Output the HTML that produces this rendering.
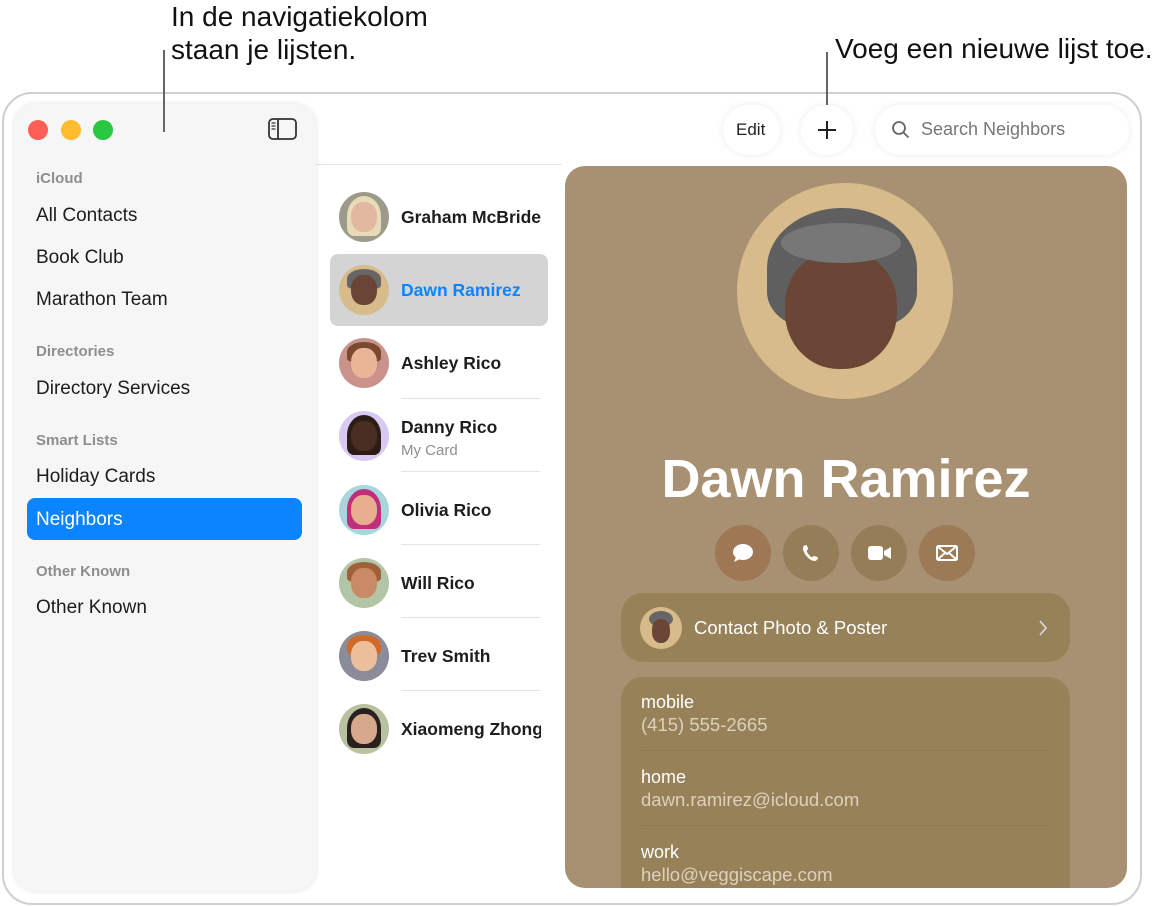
<!DOCTYPE html>
<html><head><meta charset="utf-8"><style>
*{margin:0;padding:0;box-sizing:border-box}
body{width:1170px;height:907px;background:#fff;position:relative;overflow:hidden;font-family:"Liberation Sans",sans-serif;color:#1d1d1f}
.abs{position:absolute}
.ann{position:absolute;font-size:28px;color:#111;line-height:33px;white-space:nowrap}
.win{left:2px;top:92px;width:1140px;height:813px;border:2px solid #cfcfcf;border-radius:30px;background:#fff}
.side{left:14px;top:104px;width:302px;height:787px;background:#f6f6f6;border-radius:22px;box-shadow:0 0 6px rgba(0,0,0,.12)}
.dot{position:absolute;top:120px;width:20px;height:20px;border-radius:50%}
.sh{position:absolute;left:36px;font-size:15px;font-weight:bold;color:#8e8e8e}
.si{position:absolute;left:36px;font-size:19px;color:#1d1d1f}
.sel{left:27px;top:498px;width:275px;height:42px;background:#0a84ff;border-radius:8px}
.av{position:absolute;width:50px;height:50px;border-radius:50%;overflow:hidden;left:339px}
.av i{position:absolute;left:12px;top:10px;width:26px;height:30px;border-radius:45%;}
.av b{position:absolute;left:8px;top:4px;width:34px;height:20px;border-radius:50% 50% 20% 20%}
.nm{position:absolute;left:401px;font-size:17.5px;font-weight:bold;color:#1d1d1f;white-space:nowrap;width:140px;overflow:hidden}
.sep{position:absolute;left:401px;width:139px;height:1px;background:#e3e3e3}
.btn{position:absolute;top:525px;width:56px;height:56px;border-radius:50%;background:#957e57}
.card{left:565px;top:166px;width:562px;height:722px;background:#a89172;border-radius:20px;overflow:hidden}
.lbl{position:absolute;left:76px;font-size:18px;color:#fff;white-space:nowrap}
.val{position:absolute;left:76px;font-size:18.5px;color:#ddd1bd;white-space:nowrap}
</style></head><body>
<div class="ann" style="left:171px;top:0px">In de navigatiekolom<br>staan je lijsten.</div>
<div class="ann" style="left:835px;top:32px">Voeg een nieuwe lijst toe.</div>

<div class="abs win"></div>
<div class="abs" style="left:316px;top:164px;width:246px;height:1px;background:#e6e6e6"></div>
<div class="abs side"></div>
<div class="abs" style="left:163px;top:50px;width:2px;height:82px;background:#666"></div>
<div class="abs" style="left:826px;top:52px;width:2px;height:54px;background:#666"></div>
<div class="dot" style="left:28px;background:#ff5f57"></div>
<div class="dot" style="left:61px;background:#febc2e"></div>
<div class="dot" style="left:93px;background:#28c840"></div>
<svg class="abs" style="left:268px;top:118px" width="29" height="22" viewBox="0 0 29 22"><rect x="1" y="1" width="27" height="20" rx="4" fill="none" stroke="#333" stroke-width="1.8"/><line x1="10" y1="1" x2="10" y2="21" stroke="#333" stroke-width="1.8"/><path d="M3.5 5h4M3.5 8h4M3.5 11h4" stroke="#333" stroke-width="1.3"/></svg>

<div class="sh" style="top:170px">iCloud</div>
<div class="si" style="top:205px">All Contacts</div>
<div class="si" style="top:247px">Book Club</div>
<div class="si" style="top:289px">Marathon Team</div>
<div class="sh" style="top:343px">Directories</div>
<div class="si" style="top:378px">Directory Services</div>
<div class="sh" style="top:432px">Smart Lists</div>
<div class="si" style="top:466px">Holiday Cards</div>
<div class="abs sel"></div>
<div class="si" style="top:509px;color:#fff">Neighbors</div>
<div class="sh" style="top:563px">Other Known</div>
<div class="si" style="top:597px">Other Known</div>

<!-- toolbar -->
<div class="abs" style="left:723px;top:105px;width:57px;height:50px;border-radius:25px;background:#fff;box-shadow:0 0 8px rgba(0,0,0,.08)"></div>
<div class="abs" style="left:736px;top:120px;font-size:17px;color:#222">Edit</div>
<div class="abs" style="left:801px;top:105px;width:52px;height:50px;border-radius:25px;background:#fff;box-shadow:0 0 8px rgba(0,0,0,.08)"></div>
<svg class="abs" style="left:817px;top:120px" width="20" height="20"><path d="M10 1v18M1 10h18" stroke="#222" stroke-width="2"/></svg>
<div class="abs" style="left:875px;top:105px;width:254px;height:50px;border-radius:25px;background:#fff;box-shadow:0 0 8px rgba(0,0,0,.08)"></div>
<svg class="abs" style="left:891px;top:120px" width="20" height="20"><circle cx="8" cy="8" r="6" fill="none" stroke="#666" stroke-width="1.8"/><path d="M12.5 12.5l5 5" stroke="#666" stroke-width="1.8"/></svg>
<div class="abs" style="left:921px;top:119px;font-size:18px;color:#777">Search Neighbors</div>

<!-- list -->
<div class="abs" style="left:330px;top:254px;width:218px;height:72px;background:#d4d4d4;border-radius:8px"></div>
<div class="av" style="top:192px;background:#9c9a8a"><b style="background:#e8dcb8;height:40px"></b><i style="background:#e2b9a0"></i></div>
<div class="nm" style="top:207px">Graham McBride</div>
<div class="av" style="top:265px;background:#d8bb8a"><b style="background:#666"></b><i style="background:#6a4535"></i></div>
<div class="nm" style="top:280px;color:#0a84ff">Dawn Ramirez</div>
<div class="av" style="top:338px;background:#c9928a"><b style="background:#7a4a30"></b><i style="background:#e8b596"></i></div>
<div class="nm" style="top:353px">Ashley Rico</div>
<div class="sep" style="top:398px"></div>
<div class="av" style="top:411px;background:#d9c9f2"><b style="background:#2b1d16;height:40px"></b><i style="background:#4a2e22"></i></div>
<div class="nm" style="top:417px">Danny Rico</div>
<div class="abs" style="left:401px;top:442px;font-size:15px;color:#8e8e8e">My Card</div>
<div class="sep" style="top:471px"></div>
<div class="av" style="top:485px;background:#a9d6dc"><b style="background:#c0307a;height:40px"></b><i style="background:#e7ae90"></i></div>
<div class="nm" style="top:500px">Olivia Rico</div>
<div class="sep" style="top:544px"></div>
<div class="av" style="top:558px;background:#b2c5a6"><b style="background:#a0603a"></b><i style="background:#c98b66"></i></div>
<div class="nm" style="top:573px">Will Rico</div>
<div class="sep" style="top:617px"></div>
<div class="av" style="top:631px;background:#8a8d99"><b style="background:#d06a2a"></b><i style="background:#ecbf9c"></i></div>
<div class="nm" style="top:646px">Trev Smith</div>
<div class="sep" style="top:690px"></div>
<div class="av" style="top:704px;background:#b8c2a0"><b style="background:#2a2020;height:40px"></b><i style="background:#d6a88c"></i></div>
<div class="nm" style="top:719px">Xiaomeng Zhong</div>

<!-- card -->
<div class="abs card">
  <div class="abs" style="left:172px;top:17px;width:216px;height:216px;border-radius:50%;background:#d8bb8a;overflow:hidden">
    <div class="abs" style="left:30px;top:25px;width:150px;height:120px;border-radius:50% 50% 30% 30%;background:#5f5f5f"></div>
    <div class="abs" style="left:48px;top:68px;width:112px;height:118px;border-radius:45% 45% 48% 48%;background:#6b4636"></div>
    <div class="abs" style="left:44px;top:40px;width:120px;height:40px;border-radius:50%;background:#777"></div>
  </div>
  <div class="abs" style="left:0;width:562px;top:282px;text-align:center;font-size:54px;font-weight:bold;color:#fff;white-space:nowrap">Dawn Ramirez</div>
</div>
<div class="btn" style="left:715px;background:#9e7754"></div>
<div class="btn" style="left:783px"></div>
<div class="btn" style="left:851px"></div>
<div class="btn" style="left:919px;background:#9b7a55"></div>
<svg class="abs" style="left:732px;top:543px" width="22" height="20"><ellipse cx="11" cy="9" rx="10" ry="8" fill="#fff"/><path d="M4 14l-2 5 6-3z" fill="#fff"/></svg>
<svg class="abs" style="left:802px;top:544px" width="18" height="18" viewBox="0 0 18 18"><path d="M4 1c1 0 2 3 2 4s-2 1-1 3 3 4 4 5 2-1 3-1 4 1 4 2-2 3-3 3C8 17 1 10 1 4c0-2 2-3 3-3z" fill="#fff"/></svg>
<svg class="abs" style="left:868px;top:545px" width="24" height="16"><rect x="0" y="1" width="15" height="14" rx="3" fill="#fff"/><path d="M16 6l7-4v12l-7-4z" fill="#fff"/></svg>
<svg class="abs" style="left:936px;top:545px" width="22" height="16"><rect x="1" y="1" width="20" height="14" rx="1.5" fill="none" stroke="#fff" stroke-width="2"/><path d="M1 1l10 8 10-8M1 15l8-7M21 15l-8-7" fill="none" stroke="#fff" stroke-width="2"/></svg>

<div class="abs" style="left:621px;top:593px;width:449px;height:69px;border-radius:22px;background:#978159"></div>
<div class="abs" style="left:640px;top:607px;width:42px;height:42px;border-radius:50%;background:#d8bb8a;overflow:hidden"><div class="abs" style="left:9px;top:4px;width:24px;height:16px;border-radius:50%;background:#666"></div><div class="abs" style="left:12px;top:12px;width:18px;height:24px;border-radius:45%;background:#6b4636"></div></div>
<div class="abs" style="left:694px;top:617px;font-size:18.5px;color:#fff;white-space:nowrap">Contact Photo &amp; Poster</div>
<svg class="abs" style="left:1038px;top:620px" width="10" height="16"><path d="M2 1l6 7-6 7" fill="none" stroke="#ddd" stroke-width="1.6"/></svg>

<div class="abs" style="left:621px;top:677px;width:449px;height:211px;border-radius:22px 22px 0 0;background:#978159"></div>
<div class="lbl" style="left:641px;top:692px">mobile</div>
<div class="val" style="left:641px;top:714px">(415) 555-2665</div>
<div class="abs" style="left:641px;top:750px;width:410px;height:1px;background:#8e7a55"></div>
<div class="lbl" style="left:641px;top:767px">home</div>
<div class="val" style="left:641px;top:789px">dawn.ramirez@icloud.com</div>
<div class="abs" style="left:641px;top:825px;width:410px;height:1px;background:#8e7a55"></div>
<div class="lbl" style="left:641px;top:842px">work</div>
<div class="val" style="left:641px;top:864px">hello@veggiscape.com</div>
<div class="abs" style="left:565px;top:888px;width:562px;height:4px;background:#fff"></div>
</body></html>
